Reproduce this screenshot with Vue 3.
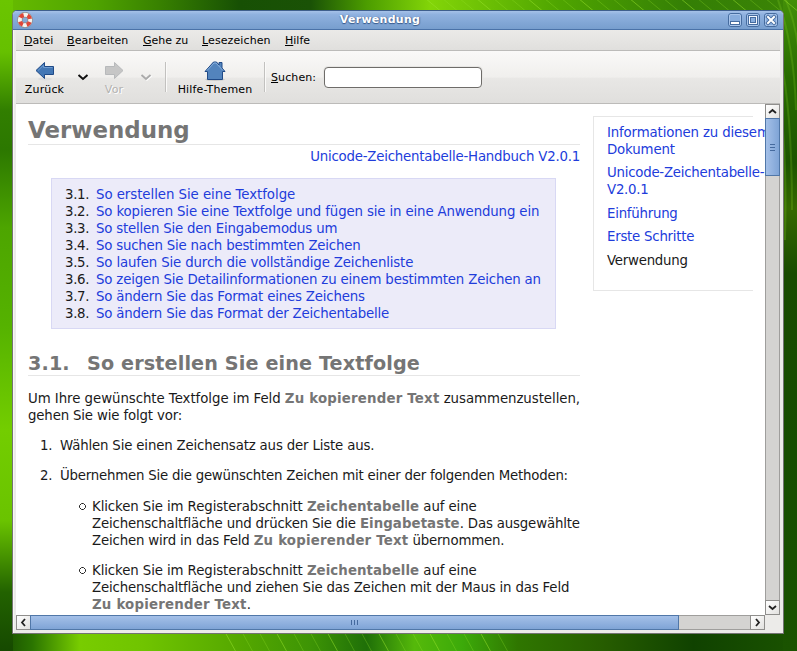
<script setup>
const menus = [['D', 'atei', 'm1'], ['B', 'earbeiten', 'm2'], ['G', 'ehe zu', 'm3'], ['L', 'esezeichen', 'm4'], ['H', 'ilfe', 'm5']]
const toc = [
  ['So erstellen Sie eine Textfolge', -0.05],
  ['So kopieren Sie eine Textfolge und fügen sie in eine Anwendung ein', -0.137],
  ['So stellen Sie den Eingabemodus um', -0.2],
  ['So suchen Sie nach bestimmten Zeichen', -0.21],
  ['So laufen Sie durch die vollständige Zeichenliste', -0.15],
  ['So zeigen Sie Detailinformationen zu einem bestimmten Zeichen an', -0.16],
  ['So ändern Sie das Format eines Zeichens', -0.18],
  ['So ändern Sie das Format der Zeichentabelle', -0.19],
]
const streaks = Array.from({ length: 34 }, (_, i) => ({ x: 205 + i * 17, o: i % 3 ? 0.28 : 0.5 }))
</script>

<template>
  <div class="desktop">
    <svg class="leaf" width="797" height="651" viewBox="0 0 797 651">
      <defs>
        <linearGradient id="top"><stop offset="0" stop-color="#68bd00" /><stop offset=".12" stop-color="#4fa300" /><stop offset=".2" stop-color="#388100" /><stop offset=".3" stop-color="#175004" /><stop offset=".39" stop-color="#1a5206" /><stop offset=".46" stop-color="#4c9d00" /><stop offset=".54" stop-color="#83d508" /><stop offset=".7" stop-color="#4fa500" /><stop offset=".86" stop-color="#347f05" /><stop offset="1" stop-color="#3b8406" /></linearGradient>
        <linearGradient id="bottom"><stop offset="0" stop-color="#174b00" /><stop offset=".04" stop-color="#2a7400" /><stop offset=".1" stop-color="#78cc00" /><stop offset=".18" stop-color="#70c400" /><stop offset=".3" stop-color="#55a800" /><stop offset=".39" stop-color="#3d9405" /><stop offset=".46" stop-color="#1f6f08" /><stop offset=".52" stop-color="#55b90a" /><stop offset=".58" stop-color="#3caa0a" /><stop offset=".65" stop-color="#2f7600" /><stop offset=".76" stop-color="#265c00" /><stop offset=".87" stop-color="#104200" /><stop offset="1" stop-color="#1a5300" /></linearGradient>
        <linearGradient id="left" x2="0" y2="1"><stop offset="0" stop-color="#6bc500" /><stop offset=".08" stop-color="#66c000" /><stop offset=".17" stop-color="#317e00" /><stop offset=".23" stop-color="#2c7800" /><stop offset=".35" stop-color="#4da500" /><stop offset=".5" stop-color="#55b200" /><stop offset=".66" stop-color="#73cd00" /><stop offset=".8" stop-color="#6ac300" /><stop offset=".91" stop-color="#226200" /><stop offset="1" stop-color="#164900" /></linearGradient>
        <linearGradient id="right" x2="0" y2="1"><stop offset="0" stop-color="#438f08" /><stop offset=".12" stop-color="#286c00" /><stop offset=".25" stop-color="#1c5500" /><stop offset=".32" stop-color="#356900" /><stop offset=".42" stop-color="#194b00" /><stop offset=".7" stop-color="#164d00" /><stop offset="1" stop-color="#1a5300" /></linearGradient>
      </defs>
      <rect width="797" height="12" fill="url(#top)" />
      <rect y="631" width="797" height="20" fill="url(#bottom)" />
      <rect width="13" height="651" fill="url(#left)" />
      <rect x="783" width="14" height="651" fill="url(#right)" />
      <g stroke="#9be52d" fill="none">
        <path v-for="s in streaks" :key="s.x" :d="`M${s.x + 220} -2l18 15`" :stroke-opacity="s.o" />
        <path v-for="s in streaks.slice(0, 17)" :key="'b' + s.x" :d="`M${s.x + 20} 632l11 20`" :stroke-opacity="s.o" />
        <path d="M778 0Q794 45 796 110M786 0Q798 30 799 60M780 55Q792 110 792 210M781 110Q787 160 785 240" stroke-width="2" stroke-opacity=".2" />
      </g>
    </svg>

    <div class="window">
      <header class="title">
        <svg class="help" width="16" height="16" viewBox="0 0 16 16">
          <circle cx="8" cy="8" r="5.2" fill="none" stroke="#8c8c8c" stroke-width="5.4" />
          <circle cx="8" cy="8" r="5.2" fill="none" stroke="#f5f3ef" stroke-width="4" />
          <circle cx="8" cy="8" r="5.2" fill="none" stroke="#df4639" stroke-width="4" stroke-dasharray="4.1 4.068" stroke-dashoffset="-2.05" />
        </svg>
        <span class="caption">Verwendung</span>
        <svg class="controls" width="52" height="16" viewBox="0 0 52 16">
          <g v-for="n in 3" :key="n" :transform="`translate(${(n - 1) * 18} 0)`">
            <rect x="1.5" y="1.5" width="13" height="13" rx="2.5" fill="#88addd" stroke="#466c9f" />
            <rect x="2.5" y="2.5" width="11" height="11" rx="1.5" fill="none" stroke="#a9c5eb" />
          </g>
          <rect x="3.5" y="9.5" width="9" height="3" fill="#fff" stroke="#466c9f" />
          <rect x="21.500" y="3.500" width="9" height="9" fill="#f4f8ff" stroke="#466c9f" />
          <rect x="23.500" y="5.500" width="5" height="5" fill="#88addd" stroke="#466c9f" />
          <path d="M41 5l6 6m0-6l-6 6" stroke="#466c9f" stroke-width="3.800" stroke-linecap="square" />
          <path d="M41 5l6 6m0-6l-6 6" stroke="#fff" stroke-width="2" stroke-linecap="square" />
        </svg>
      </header>
      <nav class="menu">
        <span v-for="m in menus" :key="m[1]" :class="m[2]"><u>{{ m[0] }}</u>{{ m[1] }}</span>
      </nav>
      <div class="tools">
        <div class="tool back">
          <svg width="20" height="20" viewBox="0 0 20 20"><ellipse cx="10" cy="18" rx="7" ry="1.500" fill="#ddd" /><path d="M1 9.500L9.500 1.500V5.500H18.500V13.500H9.500V17.500Z" fill="#4377b5" stroke="#204a87" /><path d="M3 9.500L8.500 4.300V6.500H17.500" fill="none" stroke="#6d9bd0" /></svg>
          <span>Zurück</span>
        </div>
        <svg class="chevron" width="12" height="8" viewBox="0 0 12 8"><path d="M1.500 2L6 6l4.500-4" fill="none" stroke="#111" stroke-width="2" /></svg>
        <div class="tool forward">
          <svg width="20" height="20" viewBox="0 0 20 20"><path d="M19 9.500L10.500 1.500V5.500H1.500V13.500H10.500V17.500Z" fill="#c6c6c6" stroke="#b7b9bb" /></svg>
          <span>Vor</span>
        </div>
        <svg class="chevron" width="12" height="8" viewBox="0 0 12 8"><path d="M2.500 3L7 7l4.500-4" fill="none" stroke="#fff" stroke-width="1.500" /><path d="M1.500 2L6 6l4.500-4" fill="none" stroke="#aaa" stroke-width="1.800" /></svg>
        <i class="sep first"></i>
        <div class="tool home">
          <svg width="22" height="20" viewBox="0 0 22 20"><ellipse cx="11" cy="18.500" rx="10" ry="1.500" fill="#c9c9c8" /><path d="M1 10.500L9.500 1H12.500L15 4V1.500H18V7L21 10.500H18.500V18.500H3.500V10.500Z" fill="#5384bd" stroke="#204a87" /><path d="M3 9.500L10 2H12L19 9.500" fill="none" stroke="#8ab0dc" /></svg>
          <span>Hilfe-Themen</span>
        </div>
        <i class="sep"></i>
        <label class="search"><span><u>S</u>uchen:</span><input /></label>
      </div>

      <div class="view">
        <main class="page">
          <article>
            <h1>Verwendung</h1>
            <p class="book"><a>Unicode-Zeichentabelle-Handbuch V2.0.1</a></p>
            <div class="toc">
              <div v-for="(t, i) in toc" :key="t[0]"><span>3.{{ i + 1 }}.</span><a :style="{ letterSpacing: t[1] + 'px' }">{{ t[0] }}</a></div>
            </div>
            <h2><span>3.1.</span>So erstellen Sie eine Textfolge</h2>
            <p class="intro">Um Ihre gewünschte Textfolge im Feld <b>Zu kopierender Text</b> zusammenzustellen,<br /><span class="tight">gehen Sie wie folgt vor:</span></p>
            <div class="step one"><span>1.</span>Wählen Sie einen Zeichensatz aus der Liste aus.</div>
            <div class="step two"><span>2.</span>Übernehmen Sie die gewünschten Zeichen mit einer der folgenden Methoden:</div>
            <div class="method">
              <svg width="7" height="7" viewBox="0 0 7 7"><path d="M2.500 .5h2l2 2v2l-2 2h-2l-2-2v-2z" fill="none" stroke="#222" /></svg>
              <p><span class="loose">Klicken Sie im Registerabschnitt <b class="name">Zeichentabelle</b> auf eine</span><br />Zeichenschaltfläche und drücken Sie die <b class="name">Eingabetaste</b>. Das ausgewählte<br />Zeichen wird in das Feld <b>Zu kopierender Text</b> übernommen.</p>
            </div>
            <div class="method">
              <svg width="7" height="7" viewBox="0 0 7 7"><path d="M2.500 .5h2l2 2v2l-2 2h-2l-2-2v-2z" fill="none" stroke="#222" /></svg>
              <p><span class="loose">Klicken Sie im Registerabschnitt <b class="name">Zeichentabelle</b> auf eine</span><br />Zeichenschaltfläche und ziehen Sie das Zeichen mit der Maus in das Feld<br /><b>Zu kopierender Text</b>.</p>
            </div>
          </article>
          <aside>
            <a class="doc">Informationen zu diesem<br />Dokument</a>
            <a>Unicode-Zeichentabelle-<br />V2.0.1</a>
            <a>Einführung</a>
            <a>Erste Schritte</a>
            <span>Verwendung</span>
          </aside>
        </main>
        <div class="vbar">
          <div class="btn"><svg width="9" height="7" viewBox="0 0 9 7"><path d="M1 5L4.500 2L8 5" fill="none" stroke="#222" stroke-width="1.800" /></svg></div>
          <div class="thumb"><i></i><i></i><i></i></div>
          <div class="rest"></div>
          <div class="btn"><svg width="9" height="7" viewBox="0 0 9 7"><path d="M1 2L4.500 5L8 2" fill="none" stroke="#222" stroke-width="1.800" /></svg></div>
        </div>
        <div class="hbar">
          <div class="btn"><svg width="7" height="9" viewBox="0 0 7 9"><path d="M5 1L2 4.500L5 8" fill="none" stroke="#222" stroke-width="1.800" /></svg></div>
          <div class="thumb"><i></i><i></i><i></i></div>
          <div class="rest"></div>
          <div class="btn"><svg width="7" height="9" viewBox="0 0 7 9"><path d="M2 1L5 4.500L2 8" fill="none" stroke="#222" stroke-width="1.800" /></svg></div>
        </div>
      </div>
    </div>
  </div>
</template>

<style>
html, body { margin: 0; overflow: hidden; }
</style>
<style scoped>
* { box-sizing: border-box; }
svg { display: block; flex: none; }
.desktop { position: relative; width: 797px; height: 651px; padding: 10px 13px 17px 12px; background: #2c7000; font-family: "DejaVu Sans", sans-serif; overflow: hidden; }
.leaf { position: absolute; inset: 0; }
.window { position: relative; width: 772px; height: 624px; border: 1px solid #737373; border-top-color: #3f5f8d; border-radius: 5px 5px 0 0; background: #ecebe9; overflow: hidden; padding: 0 3px; box-shadow: inset 1px 0 #f8f7f5; }
.title { height: 19px; margin: 0 -3px; display: flex; align-items: center; background: linear-gradient(#a5c1e8, #8fb1df 20%, #779ece); border-bottom: 1px solid #4a72a8; padding: 0 4px; }
.caption { flex: 1; text-align: center; color: #fff; font-size: 11px; font-weight: bold; line-height: 18px; letter-spacing: .28px; text-shadow: 0 1px 1px #36598c, 1px 0 1px #4a6f9f; }
.menu { height: 21px; display: flex; background: linear-gradient(#ebeae8, #e0dfdd); border-bottom: 1px solid #bcbbb9; padding-left: 8px; font-size: 11px; line-height: 21px; color: #000; }
.menu span { flex: none; white-space: nowrap; }
u { text-underline-offset: 1px; text-decoration-thickness: 1px; }
.m1 { width: 43px; } .m2 { width: 76px; letter-spacing: .1px; } .m3 { width: 59px; } .m4 { width: 83px; letter-spacing: .1px; }
.tools { height: 53px; display: flex; align-items: flex-start; background: linear-gradient(#faf9f8 0, #f0efed 50%, #e8e7e5 53%, #e0dfdd); border-bottom: 1px solid #bcbbb9; font-size: 11px; }
.tool { display: flex; flex-direction: column; align-items: center; padding-top: 10px; white-space: nowrap; line-height: 14px; letter-spacing: .14px; }
.tool svg { height: 20px; }
.tool span { margin-top: 2px; }
.back { width: 56px; padding-left: 1px; }
.forward { width: 38px; margin-left: 6px; color: #b3b2b0; text-shadow: 1px 1px #fff; }
.chevron { margin: 22px 0 0 5px; }
.forward + .chevron { margin-left: 7px; }
.sep { width: 2px; height: 30px; margin-top: 11px; background: linear-gradient(90deg, #c2c1bf 50%, #fbfaf9 50%); }
.first { margin-left: 13px; }
.home { width: 97px; padding-right: 1px; }
.search { display: flex; align-items: center; margin: 14px 0 0 5px; height: 24px; }
.search span { width: 53px; letter-spacing: .1px; }
.search input { width: 158px; height: 21px; margin-top: 1px; border: 1px solid #6e6c69; border-radius: 4px; background: #fff; box-shadow: 0 0 0 1px #e7e6e4; }
.view { display: grid; grid-template: 511px 15px / 749px 15px; }
.page { background: #fff; overflow: hidden; display: flex; padding: 12px 0 0 12px; font-size: 13.33px; line-height: 17px; color: #1a1a1a; white-space: nowrap; }
a { color: #213cdb; }
b { color: #757575; letter-spacing: .2px; }
.name { letter-spacing: .07px; }
article { width: 552px; flex: none; }
h1 { margin: 0; height: 29px; font-size: 22.900px; line-height: 28px; color: #757575; border-bottom: 1px solid #e6e6e6; }
p { margin: 0; }
.book { text-align: right; margin-top: 3px; letter-spacing: -.21px; }
.toc { width: 505px; height: 151px; margin: 13px 0 0 23px; border: 1px solid #d8d8f4; background: #ecebf9; padding: 7px 0 0 13px; }
.toc div { display: flex; }
.toc span { width: 31px; letter-spacing: -.3px; }
h2 { margin: 23px 0 0; height: 24px; font-size: 19.200px; line-height: 23px; letter-spacing: .12px; color: #757575; border-bottom: 1px solid #e6e6e6; display: flex; }
h2 span { width: 59px; flex: none; }
.intro { margin-top: 14px; letter-spacing: -.05px; }
.tight { letter-spacing: -.16px; }
.step { display: flex; padding-left: 12px; margin-top: 13px; letter-spacing: -.165px; }
.two { letter-spacing: -.22px; }
.step span { width: 20px; flex: none; }
.method { display: flex; padding-left: 51px; margin-top: 14px; letter-spacing: -.17px; }
.loose { letter-spacing: -.1px; }
.method svg { margin: 5px 6px 0 0; }
.method + .method { margin-top: 13px; }
aside { width: 160px; height: 175px; margin-left: 13px; padding: 7px 0 0 13px; border: solid #e6e6e6; border-width: 1px 0 1px 1px; display: flex; flex-direction: column; gap: 6.400px; letter-spacing: -.24px; flex: none; }
.doc { letter-spacing: -.15px; }
.vbar { display: flex; flex-direction: column; }
.hbar { display: flex; }
.btn { width: 15px; height: 15px; flex: none; display: flex; align-items: center; justify-content: center; border: 1px solid #8f8e8c; background: linear-gradient(135deg, #fff, #e2e1df); }
.thumb { flex: none; display: flex; align-items: center; justify-content: center; gap: 2px; border: 1px solid #5077a8; }
.vbar .thumb { height: 58px; margin-top: -1px; flex-direction: column; background: linear-gradient(90deg, #a4c0e8, #7fa4d6); }
.hbar .thumb { width: 649px; margin-left: -1px; background: linear-gradient(#a4c0e8, #7fa4d6); }
.thumb i { background: #456a9e; }
.vbar i { width: 5px; height: 1px; }
.hbar i { width: 1px; height: 5px; }
.rest { flex: 1; background: #d4d3d1; border: 1px solid #9f9e9c; }
.vbar .rest { border-width: 0 1px; }
.hbar .rest { border-width: 1px 0; }
</style>
